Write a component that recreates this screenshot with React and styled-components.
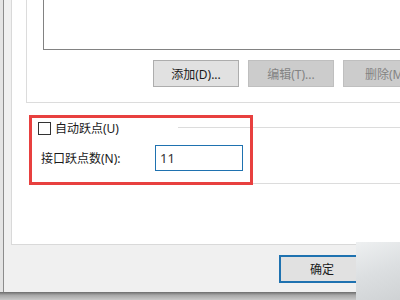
import styled, { createGlobalStyle } from "styled-components";

const GlobalStyle = createGlobalStyle`
  html, body {
    margin: 0;
    padding: 0;
  }
  body {
    font-family: "Noto Sans", "Noto Sans CJK SC", sans-serif;
    font-size: 12px;
    color: #1a1a1a;
  }
`;

const Screen = styled.div`
  position: relative;
  width: 400px;
  height: 300px;
  overflow: hidden;
  background: #e6e6e6;
  display: flex;
  flex-direction: column;
`;

const Main = styled.div`
  display: flex;
  height: 292px;
  flex-shrink: 0;
`;

const OuterStrip = styled.div`
  width: 3px;
  background: #e4e4e4;
  border-right: 1px solid #8c8c8c;
`;

const Dialog = styled.div`
  flex: 1;
  min-width: 0;
  background: #f0f0f0;
  padding-left: 7px;
  display: flex;
  flex-direction: column;
`;

const Panel = styled.div`
  box-sizing: border-box;
  height: 245px;
  width: 420px;
  background: #ffffff;
  border-left: 1px solid #d9d9d9;
  border-bottom: 1px solid #d9d9d9;
  display: flex;
  flex-direction: column;
`;

const Frame = styled.div`
  box-sizing: border-box;
  margin-left: 14px;
  height: 103px;
  width: 400px;
  border-left: 1px solid #dcdcdc;
  border-bottom: 1px solid #dcdcdc;
  padding-left: 16px;
`;

const ListBox = styled.div`
  box-sizing: border-box;
  height: 50px;
  width: 400px;
  background: #fff;
  border-left: 1px solid #828282;
  border-bottom: 1px solid #828282;
`;

const ButtonRow = styled.div`
  display: flex;
  gap: 9px;
  margin-top: 10px;
  padding-left: 110px;
`;

const Button = styled.button`
  box-sizing: border-box;
  flex-shrink: 0;
  width: 86px;
  height: 27px;
  padding: 0;
  font: inherit;
  color: ${(p) => (p.disabled ? "#838383" : "#1a1a1a")};
  background: ${(p) => (p.disabled ? "#cccccc" : "#e1e1e1")};
  border: 1px solid ${(p) => (p.disabled ? "#bfbfbf" : "#adadad")};
  white-space: nowrap;
  overflow: hidden;
  text-align: center;
`;

const GroupBox = styled.div`
  box-sizing: border-box;
  margin-top: 24px;
  margin-left: 18px;
  height: 57px;
  width: 400px;
  border: 1px solid #dcdcdc;
  border-right: none;
  display: flex;
  flex-direction: column;
`;

const GroupTitle = styled.label`
  display: flex;
  align-items: center;
  gap: 4px;
  margin-top: -6px;
  width: 140px;
  height: 13px;
  padding-left: 7px;
  background: #fff;
  line-height: 13px;
  white-space: nowrap;
`;

const CheckBox = styled.span`
  box-sizing: border-box;
  width: 13px;
  height: 13px;
  flex-shrink: 0;
  border: 1px solid #333;
  background: #fff;
`;

const FieldRow = styled.div`
  display: flex;
  align-items: center;
  margin-top: 10px;
  padding-left: 10px;
`;

const FieldLabel = styled.span`
  width: 114px;
  flex-shrink: 0;
  white-space: nowrap;
`;

const Input = styled.div`
  box-sizing: border-box;
  width: 88px;
  height: 26px;
  border: 1px solid #1f72b0;
  padding-left: 4px;
  display: flex;
  align-items: center;
  font-size: 13px;
  color: #333;
`;

const Footer = styled.div`
  display: flex;
  padding-left: 268px;
  padding-top: 10px;
`;

const OkButton = styled.button`
  box-sizing: border-box;
  flex-shrink: 0;
  width: 86px;
  height: 28px;
  padding: 0;
  font: inherit;
  color: #1a1a1a;
  background: #e1e1e1;
  border: 2px solid #1f72b0;
`;

const Shadow = styled.div`
  flex: 1;
  background: linear-gradient(#6c6c6c, #a8a8a8 40%, #c8c8c8);
`;

const Highlight = styled.div`
  position: absolute;
  left: 29px;
  top: 115px;
  width: 224px;
  height: 70px;
  box-sizing: border-box;
  border: 3px solid #e8403f;
  pointer-events: none;
`;

const Corner = styled.div`
  position: absolute;
  left: 356px;
  top: 242px;
  width: 44px;
  height: 58px;
  background: linear-gradient(160deg, #eef0f1, #dcdfe1 50%, #cfd2d4);
`;

export default function App() {
  return (
    <>
      <GlobalStyle />
      <Screen>
        <Main>
          <OuterStrip />
          <Dialog>
            <Panel>
              <Frame>
                <ListBox />
                <ButtonRow>
                  <Button>添加(D)...</Button>
                  <Button disabled>编辑(T)...</Button>
                  <Button disabled>删除(M)</Button>
                </ButtonRow>
              </Frame>
              <GroupBox>
                <GroupTitle>
                  <CheckBox />
                  自动跃点(U)
                </GroupTitle>
                <FieldRow>
                  <FieldLabel>接口跃点数(N):</FieldLabel>
                  <Input>11</Input>
                </FieldRow>
              </GroupBox>
            </Panel>
            <Footer>
              <OkButton>确定</OkButton>
            </Footer>
          </Dialog>
        </Main>
        <Shadow />
        <Highlight />
        <Corner />
      </Screen>
    </>
  );
}
